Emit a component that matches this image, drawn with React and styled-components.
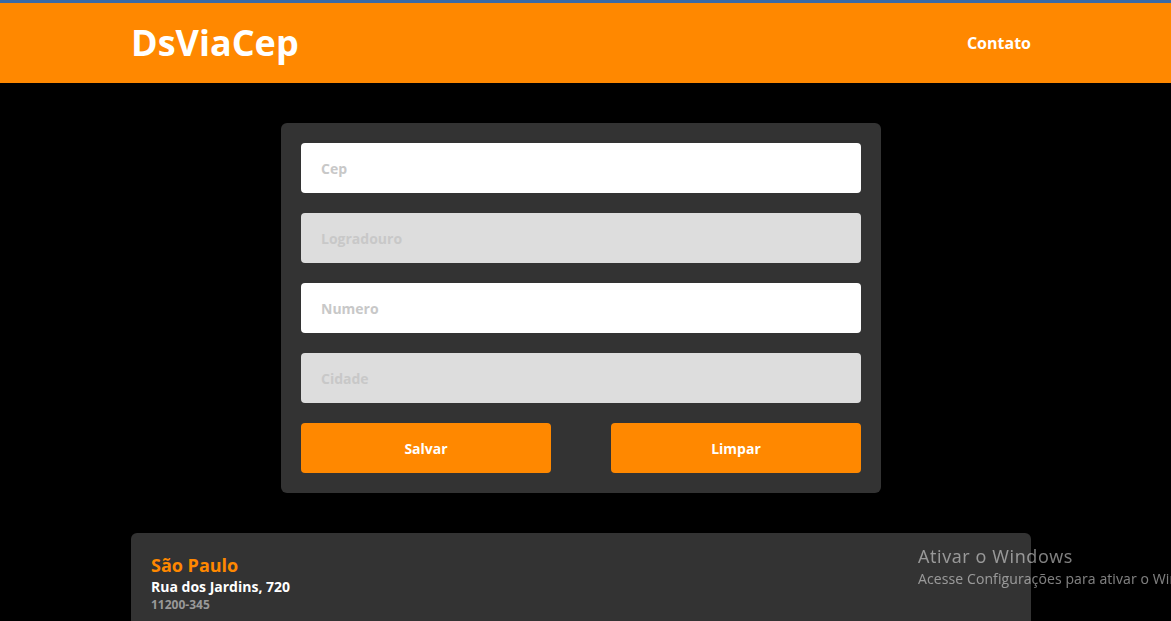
import styled, { createGlobalStyle } from 'styled-components';

const GlobalStyle = createGlobalStyle`
  * {
    box-sizing: border-box;
  }

  body {
    margin: 0;
    background-color: #000;
    font-family: 'Open Sans', 'Liberation Sans', sans-serif;
  }
`;

const Page = styled.div`
  min-height: 621px;
  background-color: #000;
`;

const Header = styled.header`
  background-color: #ff8800;
  border-top: 3px solid #3a6aa8;
  height: 83px;
  display: flex;
  align-items: center;
  padding-right: 9px;
`;

const Container = styled.div`
  width: ${({ width }) => width || 900}px;
  margin: 0 auto;
`;

const Nav = styled(Container)`
  display: flex;
  align-items: center;
  justify-content: space-between;
`;

const Logo = styled.h1`
  margin: 0;
  color: #fff;
  font-size: 36px;
  font-weight: 700;
  line-height: 1;
`;

const NavLink = styled.a`
  color: #fff;
  font-size: 16px;
  font-weight: 700;
  text-decoration: none;
`;

const Main = styled.main`
  padding: 40px 9px 0 0;
  display: flex;
  flex-direction: column;
  gap: 40px;
`;

const Form = styled.form`
  width: 600px;
  margin: 0 auto;
  background-color: #333;
  border-radius: 6px;
  padding: 20px;
  display: flex;
  flex-direction: column;
  gap: 20px;
`;

const Input = styled.input`
  width: 100%;
  height: 50px;
  border: none;
  border-radius: 4px;
  padding: 0 20px;
  font-family: inherit;
  font-size: 14px;
  font-weight: 700;
  background-color: ${({ disabled }) => (disabled ? '#dddddd' : '#fff')};
  outline: none;

  &::placeholder {
    color: #c8c8c8;
  }
`;

const Buttons = styled.div`
  display: flex;
  justify-content: space-between;
`;

const Button = styled.button`
  width: 250px;
  height: 50px;
  border: none;
  border-radius: 4px;
  background-color: #ff8800;
  color: #fff;
  font-family: inherit;
  font-size: 14px;
  font-weight: 700;
  cursor: pointer;
`;

const Card = styled.div`
  width: 900px;
  margin: 0 auto;
  background-color: #333;
  border-radius: 6px;
  padding: 20px 20px 30px;
`;

const City = styled.h3`
  margin: 0;
  color: #ff8800;
  font-size: 18px;
  font-weight: 700;
  line-height: 25px;
`;

const Street = styled.p`
  margin: 0;
  color: #fff;
  font-size: 14px;
  font-weight: 700;
  line-height: 18px;
`;

const Zip = styled.p`
  margin: 0;
  color: #999;
  font-size: 12px;
  font-weight: 700;
  line-height: 18px;
`;

const Watermark = styled.div`
  position: fixed;
  left: 918px;
  top: 543px;
  width: 253px;
  overflow: hidden;
  white-space: nowrap;
  color: rgba(255, 255, 255, 0.5);
  font-family: 'Open Sans', 'Noto Sans', sans-serif;
  pointer-events: none;

  strong {
    display: block;
    font-weight: 400;
    font-size: 18px;
    letter-spacing: 0.6px;
    line-height: 26px;
  }

  span {
    display: block;
    font-size: 14px;
    letter-spacing: 0.1px;
    line-height: 20px;
  }
`;

export default function App() {
  return (
    <Page>
      <GlobalStyle />
      <Header>
        <Nav>
          <Logo>DsViaCep</Logo>
          <NavLink href='#'>Contato</NavLink>
        </Nav>
      </Header>
      <Main>
        <Form onSubmit={(e) => e.preventDefault()}>
          <Input placeholder='Cep' />
          <Input placeholder='Logradouro' disabled />
          <Input placeholder='Numero' />
          <Input placeholder='Cidade' disabled />
          <Buttons>
            <Button type='submit'>Salvar</Button>
            <Button type='button'>Limpar</Button>
          </Buttons>
        </Form>
        <Card>
          <City>São Paulo</City>
          <Street>Rua dos Jardins, 720</Street>
          <Zip>11200-345</Zip>
        </Card>
      </Main>
      <Watermark>
        <strong>Ativar o Windows</strong>
        <span>Acesse Configurações para ativar o Windows.</span>
      </Watermark>
    </Page>
  );
}
